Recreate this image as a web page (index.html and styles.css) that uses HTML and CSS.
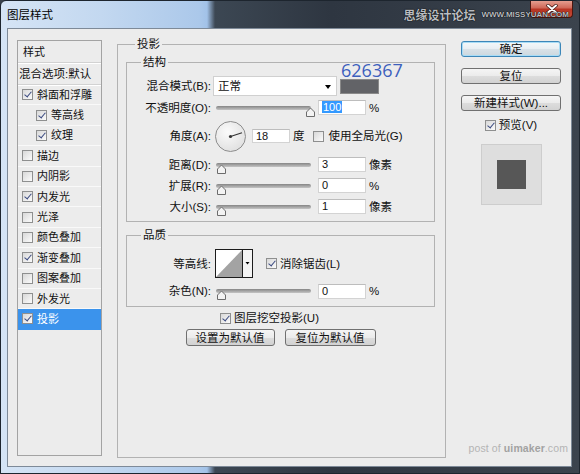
FILE: index.html
```html
<!DOCTYPE html>
<html lang="zh-CN">
<head>
<meta charset="utf-8">
<title>图层样式</title>
<link rel="stylesheet" href="styles.css">
</head>
<body>
<div class="window">
  <div class="titlebar">
    <span class="title">图层样式</span>
    <div class="close"><svg width="14" height="10" viewBox="0 0 14 10"><path d="M3 1.5 L11 8.5 M11 1.5 L3 8.5" stroke="#3a1410" stroke-width="3.4" stroke-linecap="round"/><path d="M3 1.5 L11 8.5 M11 1.5 L3 8.5" stroke="#fff" stroke-width="2" stroke-linecap="round"/></svg></div>
    <span class="wm"><span class="wm-cn">思缘设计论坛</span><span class="wm-en">WWW.MISSYUAN.COM</span></span>
  </div>
  <div class="client">
    <div class="list">
      <div class="li head">样式</div>
      <div class="li blend">混合选项:默认</div>
      <div class="li"><span class="cb on"></span>斜面和浮雕</div>
      <div class="li sub"><span class="cb on"></span>等高线</div>
      <div class="li sub"><span class="cb on"></span>纹理</div>
      <div class="li"><span class="cb"></span>描边</div>
      <div class="li"><span class="cb"></span>内阴影</div>
      <div class="li"><span class="cb on"></span>内发光</div>
      <div class="li"><span class="cb"></span>光泽</div>
      <div class="li"><span class="cb"></span>颜色叠加</div>
      <div class="li"><span class="cb on"></span>渐变叠加</div>
      <div class="li"><span class="cb"></span>图案叠加</div>
      <div class="li"><span class="cb"></span>外发光</div>
      <div class="li sel"><span class="cb on"></span>投影</div>
    </div>

    <fieldset class="grp main">
      <legend>投影</legend>
      <fieldset class="grp struct">
        <legend>结构</legend>
        <div class="row r1">
          <span class="lbl">混合模式(B):</span>
          <div class="select">正常<span class="arrow"></span></div>
          <div class="swatch"><span class="hex">626367</span></div>
        </div>
        <div class="row r2">
          <span class="lbl">不透明度(O):</span>
          <div class="slider"><span class="track"></span><span class="thumb" style="left:89px"><svg width="11" height="10" viewBox="0 0 11 10"><path d="M1.5 9.5 L1.5 5 L5.5 1 L9.5 5 L9.5 9.5 Z" fill="#f3f3f3" stroke="#6c6c6c"/></svg></span></div>
          <span class="num"><span class="hl">100</span></span>
          <span class="unit">%</span>
        </div>
        <div class="row r3">
          <span class="lbl">角度(A):</span>
          <span class="dial"><svg width="31" height="31" viewBox="0 0 31 31"><line x1="15.5" y1="15.5" x2="27" y2="11.8" stroke="#333" stroke-width="1.2"/><circle cx="15.5" cy="15.5" r="1.6" fill="#333"/></svg></span>
          <span class="num short">18</span>
          <span class="unit deg">度</span>
          <span class="cb"></span><span class="cbt">使用全局光(G)</span>
        </div>
        <div class="row r4">
          <span class="lbl">距离(D):</span>
          <div class="slider"><span class="track"></span><span class="thumb" style="left:0px"><svg width="11" height="10" viewBox="0 0 11 10"><path d="M1.5 9.5 L1.5 5 L5.5 1 L9.5 5 L9.5 9.5 Z" fill="#f3f3f3" stroke="#6c6c6c"/></svg></span></div>
          <span class="num">3</span>
          <span class="unit">像素</span>
        </div>
        <div class="row r5">
          <span class="lbl">扩展(R):</span>
          <div class="slider"><span class="track"></span><span class="thumb" style="left:0px"><svg width="11" height="10" viewBox="0 0 11 10"><path d="M1.5 9.5 L1.5 5 L5.5 1 L9.5 5 L9.5 9.5 Z" fill="#f3f3f3" stroke="#6c6c6c"/></svg></span></div>
          <span class="num">0</span>
          <span class="unit">%</span>
        </div>
        <div class="row r6">
          <span class="lbl">大小(S):</span>
          <div class="slider"><span class="track"></span><span class="thumb" style="left:0px"><svg width="11" height="10" viewBox="0 0 11 10"><path d="M1.5 9.5 L1.5 5 L5.5 1 L9.5 5 L9.5 9.5 Z" fill="#f3f3f3" stroke="#6c6c6c"/></svg></span></div>
          <span class="num">1</span>
          <span class="unit">像素</span>
        </div>
      </fieldset>

      <fieldset class="grp quality">
        <legend>品质</legend>
        <div class="row q1">
          <span class="lbl">等高线:</span>
          <span class="contour"><svg width="38" height="29" viewBox="0 0 38 29"><rect x="0.5" y="0.5" width="37" height="28" fill="#fff" stroke="#1c1c1c"/><polygon points="1,28 27,1 27,28" fill="#a3a3a3"/><line x1="27.5" y1="1" x2="27.5" y2="28" stroke="#1c1c1c"/><rect x="28" y="1" width="9" height="27" fill="#f4f4f4"/><polygon points="30.5,13 34.5,13 32.5,15.5" fill="#000"/></svg></span>
          <span class="cb on aa"></span><span class="cbt tight">消除锯齿(L)</span>
        </div>
        <div class="row q2">
          <span class="lbl">杂色(N):</span>
          <div class="slider"><span class="track"></span><span class="thumb" style="left:0px"><svg width="11" height="10" viewBox="0 0 11 10"><path d="M1.5 9.5 L1.5 5 L5.5 1 L9.5 5 L9.5 9.5 Z" fill="#f3f3f3" stroke="#6c6c6c"/></svg></span></div>
          <span class="num">0</span>
          <span class="unit">%</span>
        </div>
      </fieldset>

      <div class="knock"><span class="cb on"></span><span class="cbt tight">图层挖空投影(U)</span></div>
      <div class="defaults">
        <span class="btn w1">设置为默认值</span>
        <span class="btn w2">复位为默认值</span>
      </div>
    </fieldset>

    <div class="side">
      <span class="btn sbtn ok">确定</span>
      <span class="btn sbtn">复位</span>
      <span class="btn sbtn">新建样式(W)...</span>
      <div class="preview-cb"><span class="cb on"></span><span class="cbt tight">预览(V)</span></div>
      <div class="preview"><span class="pv-sq"></span></div>
      <div class="credit">post of <b>uimaker</b>.com</div>
    </div>
  </div>
</div>
</body>
</html>
```
FILE: styles.css
```css
* { box-sizing: border-box; }
html, body { margin: 0; padding: 0; }
body {
  width: 580px; height: 474px; overflow: hidden;
  background: #3a424c;
  font-family: "Liberation Sans", "Noto Sans CJK SC", sans-serif;
  font-size: 11.5px; line-height: 14px; color: #111;
}
.window {
  width: 580px; height: 474px;
  border: 1px solid #1d252e;
  border-radius: 6px 6px 0 0;
  background: linear-gradient(90deg, #d5e4f5 0, #c3d8f0 100px, #abc8ea 198px, #a2c2e8 206px, #3c4753 214px, #2e3641 330px, #3b434d 100%);
  display: flex; flex-direction: column;
  overflow: hidden;
}
.titlebar { height: 27px; display: flex; align-items: center; padding-left: 6px; position: relative; }
.title { color: #000; }
.close {
  position: absolute; right: 6px; top: -1px;
  width: 43px; height: 18px;
  border: 1px solid #4a1710; border-top: 0;
  border-radius: 0 0 4px 4px;
  background: linear-gradient(#e8a597 0, #d06a5a 45%, #b83524 55%, #c44c38 100%);
  display: flex; align-items: center; justify-content: center;
}
.wm { position: absolute; right: 10px; top: 7px; display: flex; align-items: center; gap: 6px; }
.wm-cn { font-family: "Noto Sans CJK SC", sans-serif; font-size: 12px; font-weight: 700; color: #b9bcc0; text-shadow: 0 0 1px #000, 0 0 1px #000; }
.wm-en { font-size: 8px; font-weight: 700; color: #b9bcc0; text-shadow: 0 0 1px #000, 0 0 1px #000; }

.client {
  flex: 1;
  margin: 0 7px 6px 6px;
  border: 1px solid #7e8a98;
  background: #ececec;
  padding: 9px 0 0 9px;
  display: flex; align-items: flex-start;
}

/* left list */
.list {
  margin-top: 2px; margin-right: 15px;
  width: 85px; height: 416px;
  border: 1px solid #a3a3a3;
  background: #ececec;
  font-size: 11px;
}
.li {
  height: 20.4px;
  display: flex; align-items: center;
  padding-left: 4px;
  border-bottom: 1px solid #f9f9f9;
  white-space: nowrap;
}
.li.head { height: 22px; padding-left: 5px; border-bottom: 1px solid #d2d2d2; box-shadow: 0 1px 0 #fff; }
.li.blend { height: 22px; padding-left: 1px; border-bottom: 1px solid #d2d2d2; box-shadow: 0 1px 0 #fff; font-size: 11.5px; }
.li .cb { margin-right: 4px; }
.li.sub { padding-left: 18px; }
.li.sel { background: #3b93ec; color: #fff; border-bottom-color: #3b93ec; }

/* checkbox */
.cb {
  display: inline-block; flex: none;
  width: 11px; height: 11px;
  border: 1px solid #8e8f8f;
  background: linear-gradient(135deg, #d8d8d8, #fbfbfb);
  position: relative;
}
.cb.on::after {
  content: ""; position: absolute;
  left: 3px; top: 0px; width: 3px; height: 6px;
  border: solid #3a4a80; border-width: 0 1.6px 1.6px 0;
  transform: rotate(40deg);
}

/* fieldsets */
fieldset.grp {
  margin: 0; min-width: 0;
  border: 1px solid #b2b2b2;
}
fieldset.grp > legend { padding: 0 2px; line-height: 12px; }
.main { width: 329px; height: 420px; padding: 0 10px 0 8px; margin-right: 15px !important; }
.main > legend { margin-left: 9px; }
.struct { width: 100%; margin-top: 6px !important; padding: 8px 0 4px 0; }
.struct > legend, .quality > legend { margin-left: 14px; }
.quality { width: 100%; margin-top: 7px !important; padding: 8px 0 5px 0; }

.row { display: flex; align-items: center; }
.lbl { width: 84px; text-align: right; flex: none; white-space: nowrap; }
.r1 { height: 20px; }
.r2 { height: 21px; margin-top: 1px; }
.r3 { height: 32px; margin-top: 2px; }
.r4 { height: 21px; margin-top: 2px; }
.r5, .r6 { height: 21px; }
.q1 { height: 29px; }
.q2 { height: 20px; margin-top: 3px; }

.select {
  margin-left: 2px; width: 124px; height: 20px;
  background: #fff; border: 1px solid #d0d0d0;
  padding-left: 4px; line-height: 18px;
  position: relative;
}
.arrow {
  position: absolute; right: 5px; top: 8px;
  border-left: 3px solid transparent; border-right: 3px solid transparent; border-top: 4px solid #000;
}
.swatch {
  margin-left: 3px; width: 39px; height: 15px;
  background: #626367; border: 1px solid #8a8a8a;
  position: relative;
}
.hex {
  position: absolute; left: 0; bottom: 100%; margin-bottom: 1px;
  font-family: "Open Sans", sans-serif; font-size: 18px; line-height: 18px;
  color: #3d5fbd; white-space: nowrap;
}

.slider { margin-left: 5px; width: 95px; height: 16px; position: relative; flex: none; }
.track {
  position: absolute; left: 0; right: 0; top: 6px; height: 4px;
  border-radius: 2px;
  background: linear-gradient(#858585, #c4c4c4);
}
.thumb { position: absolute; top: 7px; width: 11px; height: 10px; display: block; }
.thumb svg { display: block; }

.num {
  margin-left: 7px; width: 48px; height: 15px; flex: none;
  background: #fff; border: 1px solid #d3d3d3; border-top-color: #bdbdbd;
  font-family: "Liberation Sans", sans-serif; font-size: 11px; line-height: 13px;
  padding-left: 3px;
}
.num.short { width: 38px; margin-left: 6px; height: 14px; line-height: 12px; }
.hl { background: #3399ff; color: #fff; padding: 0 1px; }
.unit { margin-left: 3px; }
.unit.deg { margin-right: 8px; }
.cbt { margin-left: 5px; white-space: nowrap; }
.cbt.tight { margin-left: 3px; }

.dial {
  margin-left: 4px; width: 31px; height: 31px; flex: none;
  border: 1px solid #8d8d8d; border-radius: 50%;
  background: radial-gradient(circle at 40% 35%, #fbfbfb, #d9d9d9);
  position: relative;
}
.dial svg { position: absolute; left: -1px; top: -1px; }

.contour { margin-left: 4px; width: 38px; height: 29px; flex: none; }
.contour svg { display: block; }
.cb.aa { margin-left: 13px; }

.knock { display: flex; align-items: center; height: 12px; margin-top: 5px; padding-left: 94px; }
.defaults { display: flex; justify-content: center; gap: 10px; margin-top: 5px; }

.btn {
  display: flex; align-items: center; justify-content: center;
  height: 17px;
  border: 1px solid #707070; border-radius: 3px;
  background: linear-gradient(#f5f5f5 0, #ebebeb 50%, #dddddd 50%, #d2d2d2 100%);
  white-space: nowrap;
}
.w1 { width: 89px; }
.w2 { width: 91px; }

/* right side */
.side {
  margin-top: 3px; width: 107px; height: 415px;
  display: flex; flex-direction: column;
}
.sbtn { width: 100px; height: 16px; margin-bottom: 11px; }
.sbtn.ok {
  border-color: #3c86b8;
  box-shadow: inset 0 0 0 1px #a8dcf6;
  background: linear-gradient(#f4f8fa 0, #e8eef2 50%, #d9e2e8 50%, #ccd7de 100%);
}
.preview-cb { display: flex; align-items: center; justify-content: center; width: 100px; height: 14px; margin-top: -4px; }
.preview {
  margin: 12px 0 0 20px;
  width: 61px; height: 61px;
  background: #dedede; border: 1px solid #cdcdcd;
  display: flex; align-items: center; justify-content: center;
}
.pv-sq { width: 29px; height: 29px; background: #575757; }
.credit {
  margin-top: auto; margin-bottom: 1px;
  text-align: right;
  font-size: 10.5px; color: #b4b4b4; letter-spacing: 0.1px;
}
.credit b { color: #a2a2a2; }
```
